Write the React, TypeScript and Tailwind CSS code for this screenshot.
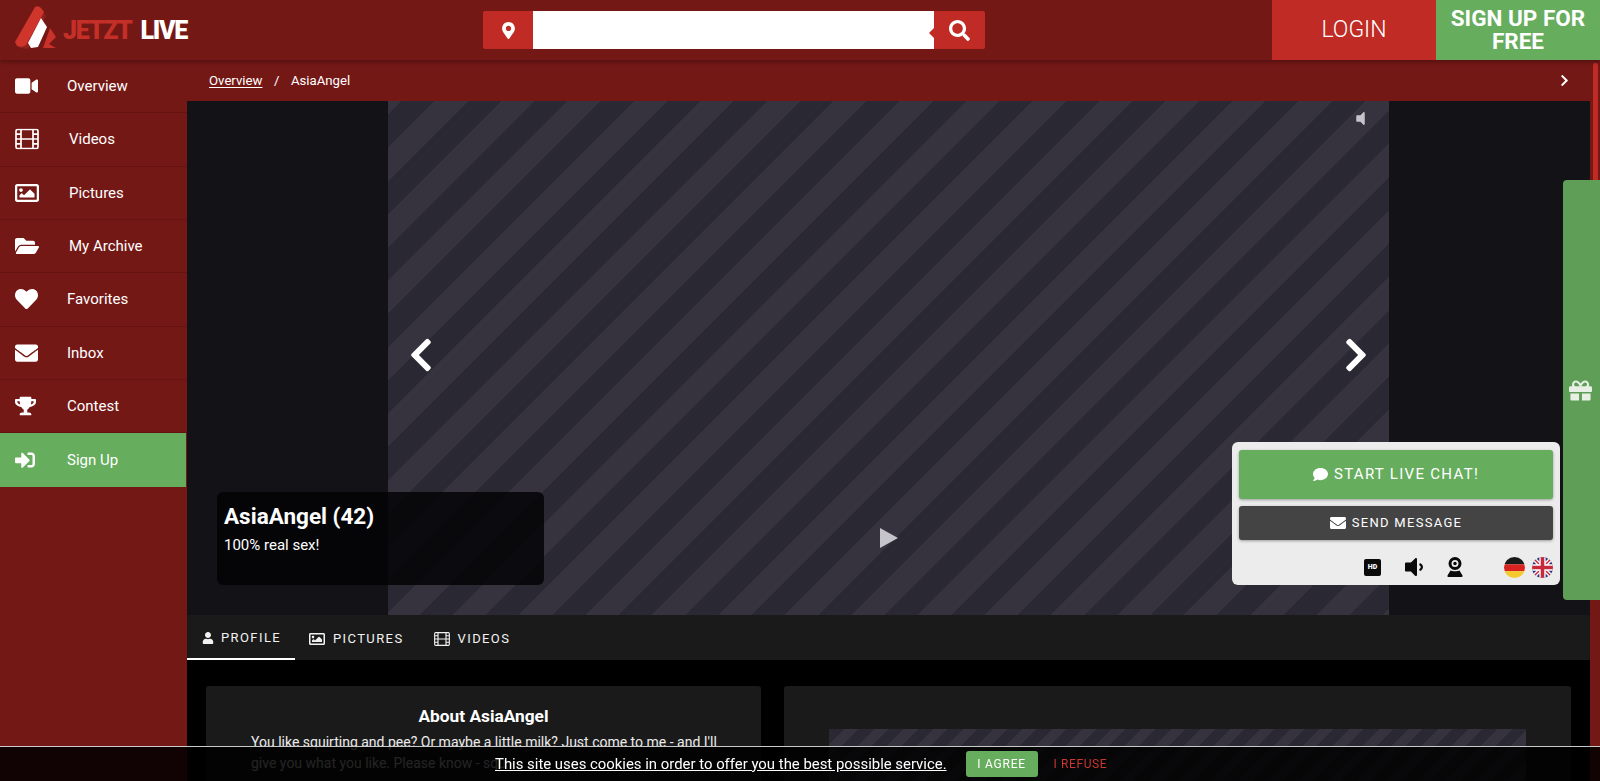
import {
  FaChevronLeft,
  FaChevronRight,
  FaComment,
  FaEnvelope,
  FaFolderOpen,
  FaGift,
  FaHeart,
  FaMapMarkerAlt,
  FaRegImage,
  FaSearch,
  FaSignInAlt,
  FaTrophy,
  FaUser,
  FaVideo,
  FaVolumeDown,
  FaVolumeOff,
} from 'react-icons/fa';

function FilmIcon({ className }: { className?: string }) {
  return (
    <svg viewBox="0 0 24 21" className={className} fill="none" stroke="currentColor" strokeWidth="1.7">
      <rect x="1" y="1" width="22" height="19" rx="1.5" />
      <path d="M6 1v19M18 1v19M1 5.7h5M1 10.5h5M1 15.3h5M18 5.7h5M18 10.5h5M18 15.3h5M6 10.5h12" />
    </svg>
  );
}

function Logo() {
  return (
    <div className="flex h-full items-center">
      <svg viewBox="0 0 60 60" className="h-[60px] w-[60px] shrink-0">
        <path d="M16 44 L36 9 L42 10 L46 16 L28 49 L20 48 Z" fill="#8f211d" />
        <path d="M15 42 L35 7 Q38 5 41 8 L44 12 L26 45 Q22 48 17 46 Z" fill="#d0352c" />
        <path d="M28 43 L41 18 L47 27 L38 47 L31 48 Z" fill="#ffffff" />
        <path d="M43 48 L50 28 L56 37 L49 44 L56 48 Z" fill="#c9322a" />
      </svg>
      <span className="ml-[3px] text-[25px] leading-none font-black tracking-[-1.3px] text-[#c42f27]">JETZT</span>
      <span className="ml-[9px] text-[25px] leading-none font-black tracking-[-1.3px] text-white">LIVE</span>
    </div>
  );
}

function Header() {
  return (
    <header className="relative z-20 flex h-[60px] shrink-0 bg-[#741816] shadow-[0_2px_4px_rgba(0,0,0,0.3)]">
      <div className="w-[483px] shrink-0">
        <Logo />
      </div>
      <div className="mt-[11px] flex h-[38px] w-[502px]">
        <div className="flex w-[50px] items-center justify-center rounded-l-[2px] bg-[#c02b25] text-white">
          <FaMapMarkerAlt className="text-[17px]" />
        </div>
        <div className="flex-1 bg-white" />
        <div className="relative flex w-[51px] items-center justify-center rounded-r-[2px] bg-[#c02b25] text-white">
          <span className="absolute left-[-5px] top-[17px] h-0 w-0 border-y-[5px] border-r-[5px] border-y-transparent border-r-[#c02b25]" />
          <FaSearch className="text-[21px]" />
        </div>
      </div>
      <div className="ml-auto flex">
        <div className="flex w-[164px] items-center justify-center bg-[#c02b25] text-[23px] font-light text-white">LOGIN</div>
        <div className="flex w-[164px] items-center justify-center bg-[#66ad5e] px-2 text-center text-[22.5px] leading-[23px] font-bold text-white">
          SIGN UP FOR FREE
        </div>
      </div>
    </header>
  );
}

const navItems = [
  { label: 'Overview', icon: <FaVideo className="text-[23px]" />, pad: 'pl-[67px]' },
  { label: 'Videos', icon: <FilmIcon className="h-[21px] w-[24px]" />, pad: 'pl-[69px]' },
  { label: 'Pictures', icon: <FaRegImage className="text-[24px]" />, pad: 'pl-[69px]' },
  { label: 'My Archive', icon: <FaFolderOpen className="text-[24px]" />, pad: 'pl-[69px]' },
  { label: 'Favorites', icon: <FaHeart className="text-[23px]" />, pad: 'pl-[67px]' },
  { label: 'Inbox', icon: <FaEnvelope className="text-[23px]" />, pad: 'pl-[67px]' },
  { label: 'Contest', icon: <FaTrophy className="text-[21px]" />, pad: 'pl-[67px]' },
];

function Sidebar() {
  return (
    <aside className="w-[187px] shrink-0 bg-[#741816] text-[15px] text-white">
      {navItems.map((item) => (
        <div key={item.label} className={`relative flex h-[53.33px] items-center border-b border-[#641311] ${item.pad}`}>
          <span className="absolute left-[15px] top-1/2 -translate-y-1/2">{item.icon}</span>
          {item.label}
        </div>
      ))}
      <div className="relative mr-[1px] flex h-[53.33px] items-center bg-[#66ad5e] pl-[67px]">
        <FaSignInAlt className="absolute left-[15px] top-1/2 -translate-y-1/2 text-[20px]" />
        Sign Up
      </div>
    </aside>
  );
}

function Breadcrumb() {
  return (
    <div className="flex h-[41px] shrink-0 items-center bg-[#741816] pl-[22px] pr-[19px] text-[13.2px] text-white">
      <span className="underline underline-offset-2">Overview</span>
      <span className="mx-[11.5px]">/</span>
      <span>AsiaAngel</span>
      <FaChevronRight className="ml-auto text-[13px]" />
    </div>
  );
}

function GermanFlag() {
  return (
    <svg viewBox="0 0 20 20" className="h-[21px] w-[21px]">
      <defs>
        <clipPath id="de-clip"><circle cx="10" cy="10" r="10" /></clipPath>
      </defs>
      <g clipPath="url(#de-clip)">
        <rect width="20" height="7" fill="#1a1a1a" />
        <rect y="7" width="20" height="6.5" fill="#d8231f" />
        <rect y="13.5" width="20" height="6.5" fill="#f5ca2c" />
      </g>
    </svg>
  );
}

function UkFlag() {
  return (
    <svg viewBox="0 0 20 20" className="h-[21px] w-[21px]">
      <defs>
        <clipPath id="uk-clip"><circle cx="10" cy="10" r="10" /></clipPath>
      </defs>
      <g clipPath="url(#uk-clip)">
        <rect width="20" height="20" fill="#27337a" />
        <path d="M0 0L20 20M20 0L0 20" stroke="#fff" strokeWidth="4" />
        <path d="M0 0L20 20M20 0L0 20" stroke="#c8283c" strokeWidth="1.4" />
        <path d="M10 0V20M0 10H20" stroke="#fff" strokeWidth="6" />
        <path d="M10 0V20M0 10H20" stroke="#c8283c" strokeWidth="3.4" />
      </g>
    </svg>
  );
}

function WebcamIcon() {
  return (
    <svg viewBox="0 0 16 20" className="h-[20px] w-[16px]" fill="#0a0a0a">
      <path fillRule="evenodd" d="M8 0a6.5 6.5 0 1 1 0 13A6.5 6.5 0 0 1 8 0Zm0 3a3.5 3.5 0 1 0 0 7 3.5 3.5 0 0 0 0-7Z" />
      <circle cx="8" cy="6.5" r="1.7" />
      <path d="M3.5 13.5C5 14.6 11 14.6 12.5 13.5L15.5 18.5Q16 20 14.5 20H1.5Q0 20 .5 18.5Z" />
    </svg>
  );
}

function ChatPanel() {
  return (
    <div className="absolute left-[1045px] top-[341px] z-10 flex h-[143px] w-[328px] flex-col rounded-[6px] bg-[#ececec] px-[7px] pt-[8px]">
      <div className="flex h-[49px] items-center justify-center gap-[6px] rounded-[3px] bg-[#66ad5e] text-[15px] tracking-[1.3px] text-white shadow-[0_1px_3px_rgba(0,0,0,0.35)]">
        <FaComment className="text-[15px]" />
        START LIVE CHAT!
      </div>
      <div className="mt-[7px] flex h-[34px] items-center justify-center gap-[6px] rounded-[3px] bg-[#444444] text-[13px] tracking-[1.3px] text-white shadow-[0_1px_3px_rgba(0,0,0,0.35)]">
        <FaEnvelope className="text-[16px]" />
        SEND MESSAGE
      </div>
      <div className="mt-[15px] flex items-center pl-[125px] text-[#0a0a0a]">
        <div className="flex h-[17px] w-[17px] items-center justify-center rounded-[2px] bg-[#0a0a0a] text-[7px] leading-none font-black text-white">HD</div>
        <FaVolumeDown className="ml-[21px] text-[24px]" />
        <div className="ml-[21px]"><WebcamIcon /></div>
        <div className="ml-[41px]"><GermanFlag /></div>
        <div className="ml-[7px]"><UkFlag /></div>
      </div>
    </div>
  );
}

function Hero() {
  return (
    <section className="relative flex h-[514px] shrink-0 bg-[#121217]">
      <div className="w-[201px] shrink-0" />
      <div className="relative w-[1001px] shrink-0 bg-[repeating-linear-gradient(135deg,#36333f_0px,#36333f_9.6px,#2a2832_9.6px,#2a2832_33px,#36333f_33px,#36333f_47px)]">
        <FaVolumeOff className="absolute left-[964px] top-[9px] text-[17px] text-[#c4c4ca]" />
        <FaChevronLeft className="absolute left-[14px] top-[235px] text-[38px] text-white" />
        <FaChevronRight className="absolute left-[949px] top-[235px] text-[38px] text-white" />
        <svg viewBox="0 0 18 20" className="absolute left-[492px] top-[427px] h-[20px] w-[18px]">
          <polygon points="0,0 18,10 0,20" fill="#c4c4ca" />
        </svg>
      </div>
      <div className="flex-1" />
      <div className="absolute left-[30px] top-[391px] h-[93px] w-[327px] rounded-[6px] bg-[#040406]/85 px-[7px] pt-[10px] text-white">
        <div className="text-[22.5px] leading-[28px] font-bold">AsiaAngel (42)</div>
        <div className="mt-[5px] text-[15px] leading-[20px]">100% real sex!</div>
      </div>
      <ChatPanel />
    </section>
  );
}

function Tabs() {
  return (
    <nav className="flex h-[45px] shrink-0 bg-[#1a1a1a] text-[13px] tracking-[1.4px] text-[#f2f2f2]">
      <div className="flex w-[108px] items-center gap-[7px] border-b-2 border-white pl-[15px] pt-[2px]">
        <FaUser className="text-[12px]" />
        PROFILE
      </div>
      <div className="ml-[14px] flex items-center gap-[8px] pt-[2px]">
        <FaRegImage className="text-[16px]" />
        PICTURES
      </div>
      <div className="ml-[30px] flex items-center gap-[8px] pt-[2px]">
        <FilmIcon className="h-[14px] w-[16px]" />
        VIDEOS
      </div>
    </nav>
  );
}

function Profile() {
  return (
    <div className="flex flex-1 gap-[23px] bg-black pl-[19px] pr-[19px] pt-[26px]">
      <div className="h-[200px] w-[555px] shrink-0 rounded-t-[3px] bg-[#1a1a1a] pl-[45px] pr-[38px] pt-[19px] text-white">
        <h2 className="pr-[7px] text-center text-[17.3px] leading-[22px] font-bold">About AsiaAngel</h2>
        <p className="mt-[5px] text-[14px] leading-[21px] text-[#ececec]">
          You like squirting and pee? Or maybe a little milk? Just come to me - and I'll give you what you like. Please know - squ
        </p>
      </div>
      <div className="h-[200px] flex-1 rounded-t-[3px] bg-[#1a1a1a] px-[45px] pt-[43px]">
        <div className="h-[100px] bg-[repeating-linear-gradient(135deg,#2a2832_0px,#2a2832_11px,#36333f_11px,#36333f_21px)]" />
      </div>
    </div>
  );
}

function CookieBar() {
  return (
    <div className="fixed bottom-0 left-0 right-0 z-30 flex h-[35px] items-center border-t border-[#c9c9c9] bg-black/85 pl-[495px] text-white">
      <span className="text-[14.9px] underline">This site uses cookies in order to offer you the best possible service.</span>
      <span className="ml-[19px] flex h-[26px] w-[72px] items-center justify-center rounded-[3px] bg-[#66ad5e] text-[12px] tracking-[0.8px]">I AGREE</span>
      <span className="ml-[16px] text-[12px] tracking-[0.6px] text-[#c9372f]">I REFUSE</span>
    </div>
  );
}

export default function App() {
  return (
    <div className="relative flex h-screen flex-col overflow-hidden bg-[#741816] font-['Roboto',sans-serif]">
      <Header />
      <div className="flex min-h-0 flex-1">
        <Sidebar />
        <main className="flex min-w-0 flex-1 flex-col">
          <Breadcrumb />
          <Hero />
          <Tabs />
          <Profile />
        </main>
        {/* scrollbar strip */}
        <div className="w-[10px] shrink-0 pl-[3px] pt-[3px]">
          <div className="h-[530px] w-[5px] rounded-[2px] bg-[#c02b25]" />
        </div>
      </div>
      {/* gift slide-out */}
      <div className="absolute right-0 top-[180px] z-10 flex h-[420px] w-[37px] items-center justify-center rounded-l-[4px] bg-[#5f9e57] pr-[3px]">
        <FaGift className="text-[23px] text-[#e8f0e6]" />
      </div>
      <CookieBar />
    </div>
  );
}
